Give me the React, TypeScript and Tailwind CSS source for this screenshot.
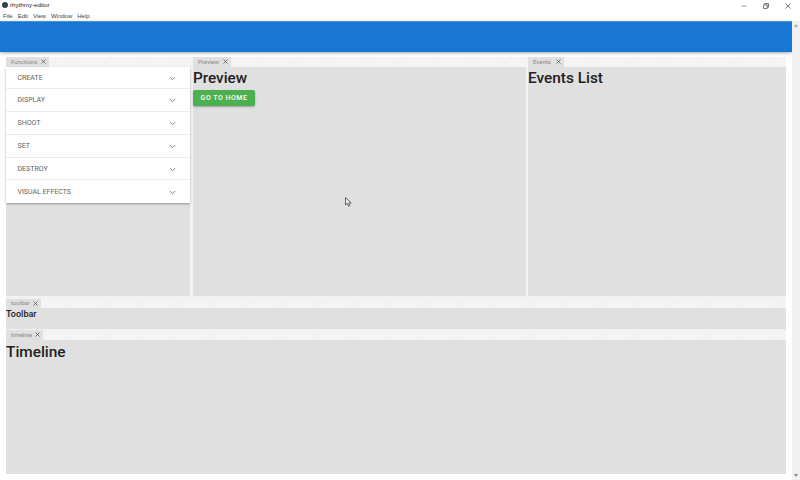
import React from "react";

function Tab({ label, w }: { label: string; w: string }) {
  return (
    <div className="h-[9.5px] flex shrink-0 bg-[repeating-linear-gradient(135deg,#f4f4f4_0px,#f4f4f4_24px,#efefef_24px,#efefef_25px)]">
      <div className={`${w} h-full bg-[#e0e0e0] flex items-center pl-[5px] text-[6px] leading-none text-[#8a8a8a]`}>
        <span>{label}</span>
        <svg width="5" height="5" viewBox="0 0 5 5" className="stroke-[#555] ml-auto mr-[3px]" strokeWidth="0.8">
          <path d="M0.5 0.5L4.5 4.5M4.5 0.5L0.5 4.5" />
        </svg>
      </div>
    </div>
  );
}

function Row({ label, last }: { label: string; last?: boolean }) {
  return (
    <div className={`h-[22.8px] flex items-center justify-between pl-[11.5px] pr-[14px] pt-[1.5px] ${last ? "" : "border-b border-[#ececec]"}`}>
      <span className="text-[7px] leading-none text-[#616161]">{label}</span>
      <svg width="7" height="5" viewBox="0 0 7 5" fill="none" stroke="#777" strokeWidth="0.9">
        <path d="M0.8 1L3.5 3.7L6.2 1" />
      </svg>
    </div>
  );
}

export default function App() {
  return (
    <div className="w-[800px] h-[480px] overflow-hidden bg-white flex flex-col font-['Roboto',sans-serif] text-[#212121] relative">
      <div className="h-[11px] flex items-center justify-between shrink-0 pl-[1.5px] font-['Liberation_Sans',sans-serif]">
        <div className="flex items-center gap-[2.5px]">
          <div className="w-[6px] h-[6px] rounded-full bg-[#33424f]" />
          <span className="text-[6.2px] leading-none text-[#222]">rhythmy-editor</span>
        </div>
        <div className="flex items-center gap-[16px] pr-[9px] pt-[1px]">
          <svg width="6" height="6" viewBox="0 0 6 6" stroke="#888" strokeWidth="0.8"><path d="M0.5 3H5.5" /></svg>
          <svg width="6" height="6" viewBox="0 0 6 6" stroke="#555" strokeWidth="0.8" fill="none"><path d="M0.5 1.8H4.2V5.5H0.5ZM1.8 1.8V0.5H5.5V4.2H4.2" /></svg>
          <svg width="6" height="6" viewBox="0 0 6 6" stroke="#555" strokeWidth="0.8"><path d="M0.5 0.5L5.5 5.5M5.5 0.5L0.5 5.5" /></svg>
        </div>
      </div>
      <div className="h-[10px] flex items-center gap-[5px] pl-[3px] text-[6px] leading-none text-[#444] shrink-0 font-['Liberation_Sans',sans-serif]">
        <span>File</span><span>Edit</span><span>View</span><span>Window</span><span>Help</span>
      </div>
      <div className="flex flex-1 min-h-0">
        <div className="w-[792px] flex flex-col">
          <div className="h-[31px] bg-[#1976d2] shrink-0 border-t border-[#4a92dc] shadow-[0_1px_3px_rgba(0,0,0,0.35)]" />
          <div className="flex-1 pl-[6px] pr-[6px] pt-[5px] flex flex-col">
            <div className="flex-1 flex flex-col bg-[#f2f2f2] mb-[6px]">
              <div className="h-[238.5px] flex shrink-0">
                <div className="w-[184px] flex flex-col">
                  <Tab label="Functions" w="w-[42.5px]" />
                  <div className="flex-1 bg-[#e0e0e0]">
                    <div className="bg-white shadow-[0_1px_2px_rgba(0,0,0,0.35)]">
                      {["CREATE", "DISPLAY", "SHOOT", "SET", "DESTROY"].map((l) => <Row key={l} label={l} />)}
                      <Row label="VISUAL EFFECTS" last />
                    </div>
                  </div>
                </div>
                <div className="w-[333px] ml-[3px] flex flex-col">
                  <Tab label="Preview" w="w-[38px]" />
                  <div className="flex-1 bg-[#e0e0e0]">
                    <div className="text-[15.3px] leading-[23px] font-medium">Preview</div>
                    <div className="w-[62px] h-[16.5px] pt-[1.5px] bg-[#4caf50] rounded-[2px] flex items-center justify-center text-white text-[7px] font-medium tracking-[0.5px] leading-none shadow-[0_1px_2px_rgba(0,0,0,0.3)]">
                      GO TO HOME
                    </div>
                  </div>
                </div>
                <div className="flex-1 ml-[2px] flex flex-col">
                  <Tab label="Events" w="w-[35.5px]" />
                  <div className="flex-1 bg-[#e0e0e0]">
                    <div className="text-[15.4px] leading-[23px] font-medium">Events List</div>
                  </div>
                </div>
              </div>
              <div className="mt-[3px] h-[30px] flex flex-col shrink-0">
                <Tab label="toolbar" w="w-[35px]" />
                <div className="flex-1 bg-[#e0e0e0] text-[9px] leading-[13px] font-medium">Toolbar</div>
              </div>
              <div className="mt-[1.5px] flex-1 flex flex-col">
                <Tab label="timeline" w="w-[37px]" />
                <div className="flex-1 bg-[#e0e0e0] text-[15.4px] leading-[24px] font-medium">Timeline</div>
              </div>
            </div>
          </div>
        </div>
        <div className="w-[8px] bg-[#f0f0f0] flex flex-col items-center justify-between py-[3px]">
          <svg width="4" height="3" viewBox="0 0 4 3" fill="#aaa"><path d="M2 0L4 3H0Z" /></svg>
          <svg width="4" height="3" viewBox="0 0 4 3" fill="#888"><path d="M0 0H4L2 3Z" /></svg>
        </div>
      </div>
      <svg className="absolute left-[345px] top-[197px]" width="7" height="10" viewBox="0 0 7 10" fill="#eee" stroke="#444" strokeWidth="0.8">
        <path d="M0.5 0.5V8L2.3 6.4L3.6 9.2L4.9 8.6L3.7 6H6.2Z" />
      </svg>
    </div>
  );
}
